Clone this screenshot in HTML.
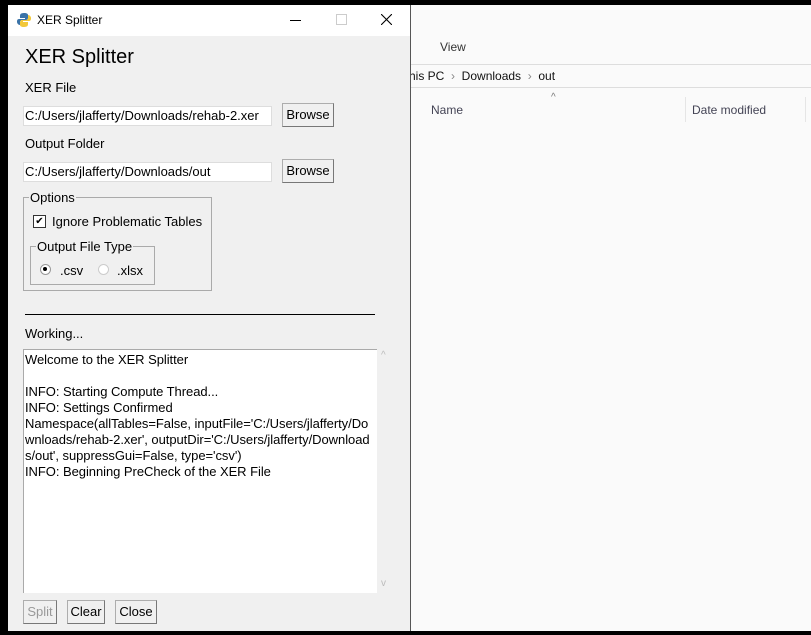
<!DOCTYPE html>
<html><head><style>
body{margin:0;width:811px;height:635px;background:#000;position:relative;overflow:hidden;font-family:"Liberation Sans",Arial,sans-serif;font-size:13px;color:#000}
.a{position:absolute;white-space:nowrap}
.exp{left:408px;top:5px;width:403px;height:626px;background:#fafafa}
.win{left:8px;top:5px;width:402px;height:626px;background:#f0f0f0;border-right:1px solid #555}
.title{left:8px;top:5px;width:402px;height:31px;background:#fff}
.inp{background:#fff;border:1px solid #ddd;height:18px;line-height:18px;padding-left:1px;font-size:13px}
.btn{background:#f0f0f0;border:1px solid #adadad;border-right-color:#777;border-bottom-color:#777;height:22px;line-height:22px;text-align:center;font-size:13px}
.grp{border:1px solid #aaa}
.lg{background:#f0f0f0;padding:0 1px;font-size:13px;line-height:14px}
</style></head><body>
<div class="a exp"></div>
<div class="a" style="left:440px;top:40px;font-size:12px;color:#333">View</div>
<div class="a" style="left:408px;top:64px;width:403px;height:1px;background:#ddd"></div>
<div class="a" style="left:408px;top:87px;width:403px;height:1px;background:#ddd"></div>
<div class="a" style="left:409px;top:69px;font-size:12px;color:#111">his PC &nbsp;<span style="color:#888">›</span>&nbsp; Downloads &nbsp;<span style="color:#888">›</span>&nbsp; out</div>
<div class="a" style="left:551px;top:92px;font-size:10px;color:#777">^</div>
<div class="a" style="left:431px;top:103px;font-size:12px;color:#445">Name</div>
<div class="a" style="left:692px;top:103px;font-size:12px;color:#445">Date modified</div>
<div class="a" style="left:685px;top:97px;width:1px;height:25px;background:#e5e5e5"></div>
<div class="a" style="left:805px;top:97px;width:1px;height:25px;background:#e5e5e5"></div>
<div class="a win"></div>
<div class="a title"></div>
<svg class="a" style="left:16px;top:12px" width="16" height="16" viewBox="0 0 16 16"><path d="M8 1C4 1 4 3 4 4v2h5v1H3C1 7 1 9 1 10s1 3 3 3V10c0-1 1-2 2-2h4c1 0 2-1 2-2V3c0-1-1-2-4-2z" fill="#3a73a8"/><path d="M8 15c4 0 4-2 4-3v-2H7V9h6c2 0 2-2 2-3s-1-3-3-3v3c0 1-1 2-2 2H6c-1 0-2 1-2 2v3c0 1 1 2 4 2z" fill="#f2c83a"/></svg>
<div class="a" style="left:37px;top:13px;font-size:12px">XER Splitter</div>
<div class="a" style="left:290px;top:20px;width:11px;height:1px;background:#000"></div>
<div class="a" style="left:336px;top:14px;width:9px;height:9px;border:1px solid #ccc"></div>
<svg class="a" style="left:381px;top:14px" width="11" height="11" viewBox="0 0 11 11"><path d="M0 0L11 11M11 0L0 11" stroke="#000" stroke-width="1.1"/></svg>
<div class="a" style="left:25px;top:46px;font-size:20px">XER Splitter</div>
<div class="a" style="left:25px;top:80px">XER File</div>
<div class="a inp" style="left:23px;top:106px;width:246px">C:/Users/jlafferty/Downloads/rehab-2.xer</div>
<div class="a btn" style="left:282px;top:103px;width:50px">Browse</div>
<div class="a" style="left:25px;top:136px">Output Folder</div>
<div class="a inp" style="left:23px;top:162px;width:246px">C:/Users/jlafferty/Downloads/out</div>
<div class="a btn" style="left:282px;top:159px;width:50px">Browse</div>
<div class="a grp" style="left:23px;top:197px;width:187px;height:92px"></div>
<div class="a lg" style="left:29px;top:191px">Options</div>
<div class="a" style="left:33px;top:215px;width:11px;height:11px;border:1px solid #333;background:#fff;font-size:10px;line-height:11px;text-align:center">✔</div>
<div class="a" style="left:52px;top:214px">Ignore Problematic Tables</div>
<div class="a grp" style="left:30px;top:246px;width:123px;height:37px"></div>
<div class="a lg" style="left:36px;top:240px">Output File Type</div>
<div class="a" style="left:40px;top:264px;width:9px;height:9px;border-radius:50%;border:1px solid #999;background:#fff"></div>
<div class="a" style="left:43px;top:267px;width:4px;height:4px;border-radius:50%;background:#000"></div>
<div class="a" style="left:60px;top:263px">.csv</div>
<div class="a" style="left:98px;top:264px;width:9px;height:9px;border-radius:50%;border:1px solid #ccc;background:#fff"></div>
<div class="a" style="left:117px;top:263px">.xlsx</div>
<div class="a" style="left:25px;top:314px;width:350px;height:1px;background:#000"></div>
<div class="a" style="left:25px;top:326px">Working...</div>
<div class="a" style="left:23px;top:349px;width:353px;height:243px;background:#fff;border-top:1px solid #aaa;border-left:1px solid #aaa"></div>
<div class="a" style="left:25px;top:352px;width:350px;line-height:16px;font-size:13px;letter-spacing:-0.05px">Welcome to the XER Splitter<br><br>INFO: Starting Compute Thread...<br>INFO: Settings Confirmed<br>Namespace(allTables=False, inputFile='C:/Users/jlafferty/Do<br>wnloads/rehab-2.xer', outputDir='C:/Users/jlafferty/Download<br>s/out', suppressGui=False, type='csv')<br>INFO: Beginning PreCheck of the XER File</div>
<div class="a" style="left:381px;top:350px;font-size:10px;color:#bbb">^</div>
<div class="a" style="left:381px;top:578px;font-size:10px;color:#bbb">v</div>
<div class="a btn" style="left:23px;top:600px;width:32px;color:#999">Split</div>
<div class="a btn" style="left:67px;top:600px;width:36px">Clear</div>
<div class="a btn" style="left:115px;top:600px;width:40px">Close</div>
</body></html>
